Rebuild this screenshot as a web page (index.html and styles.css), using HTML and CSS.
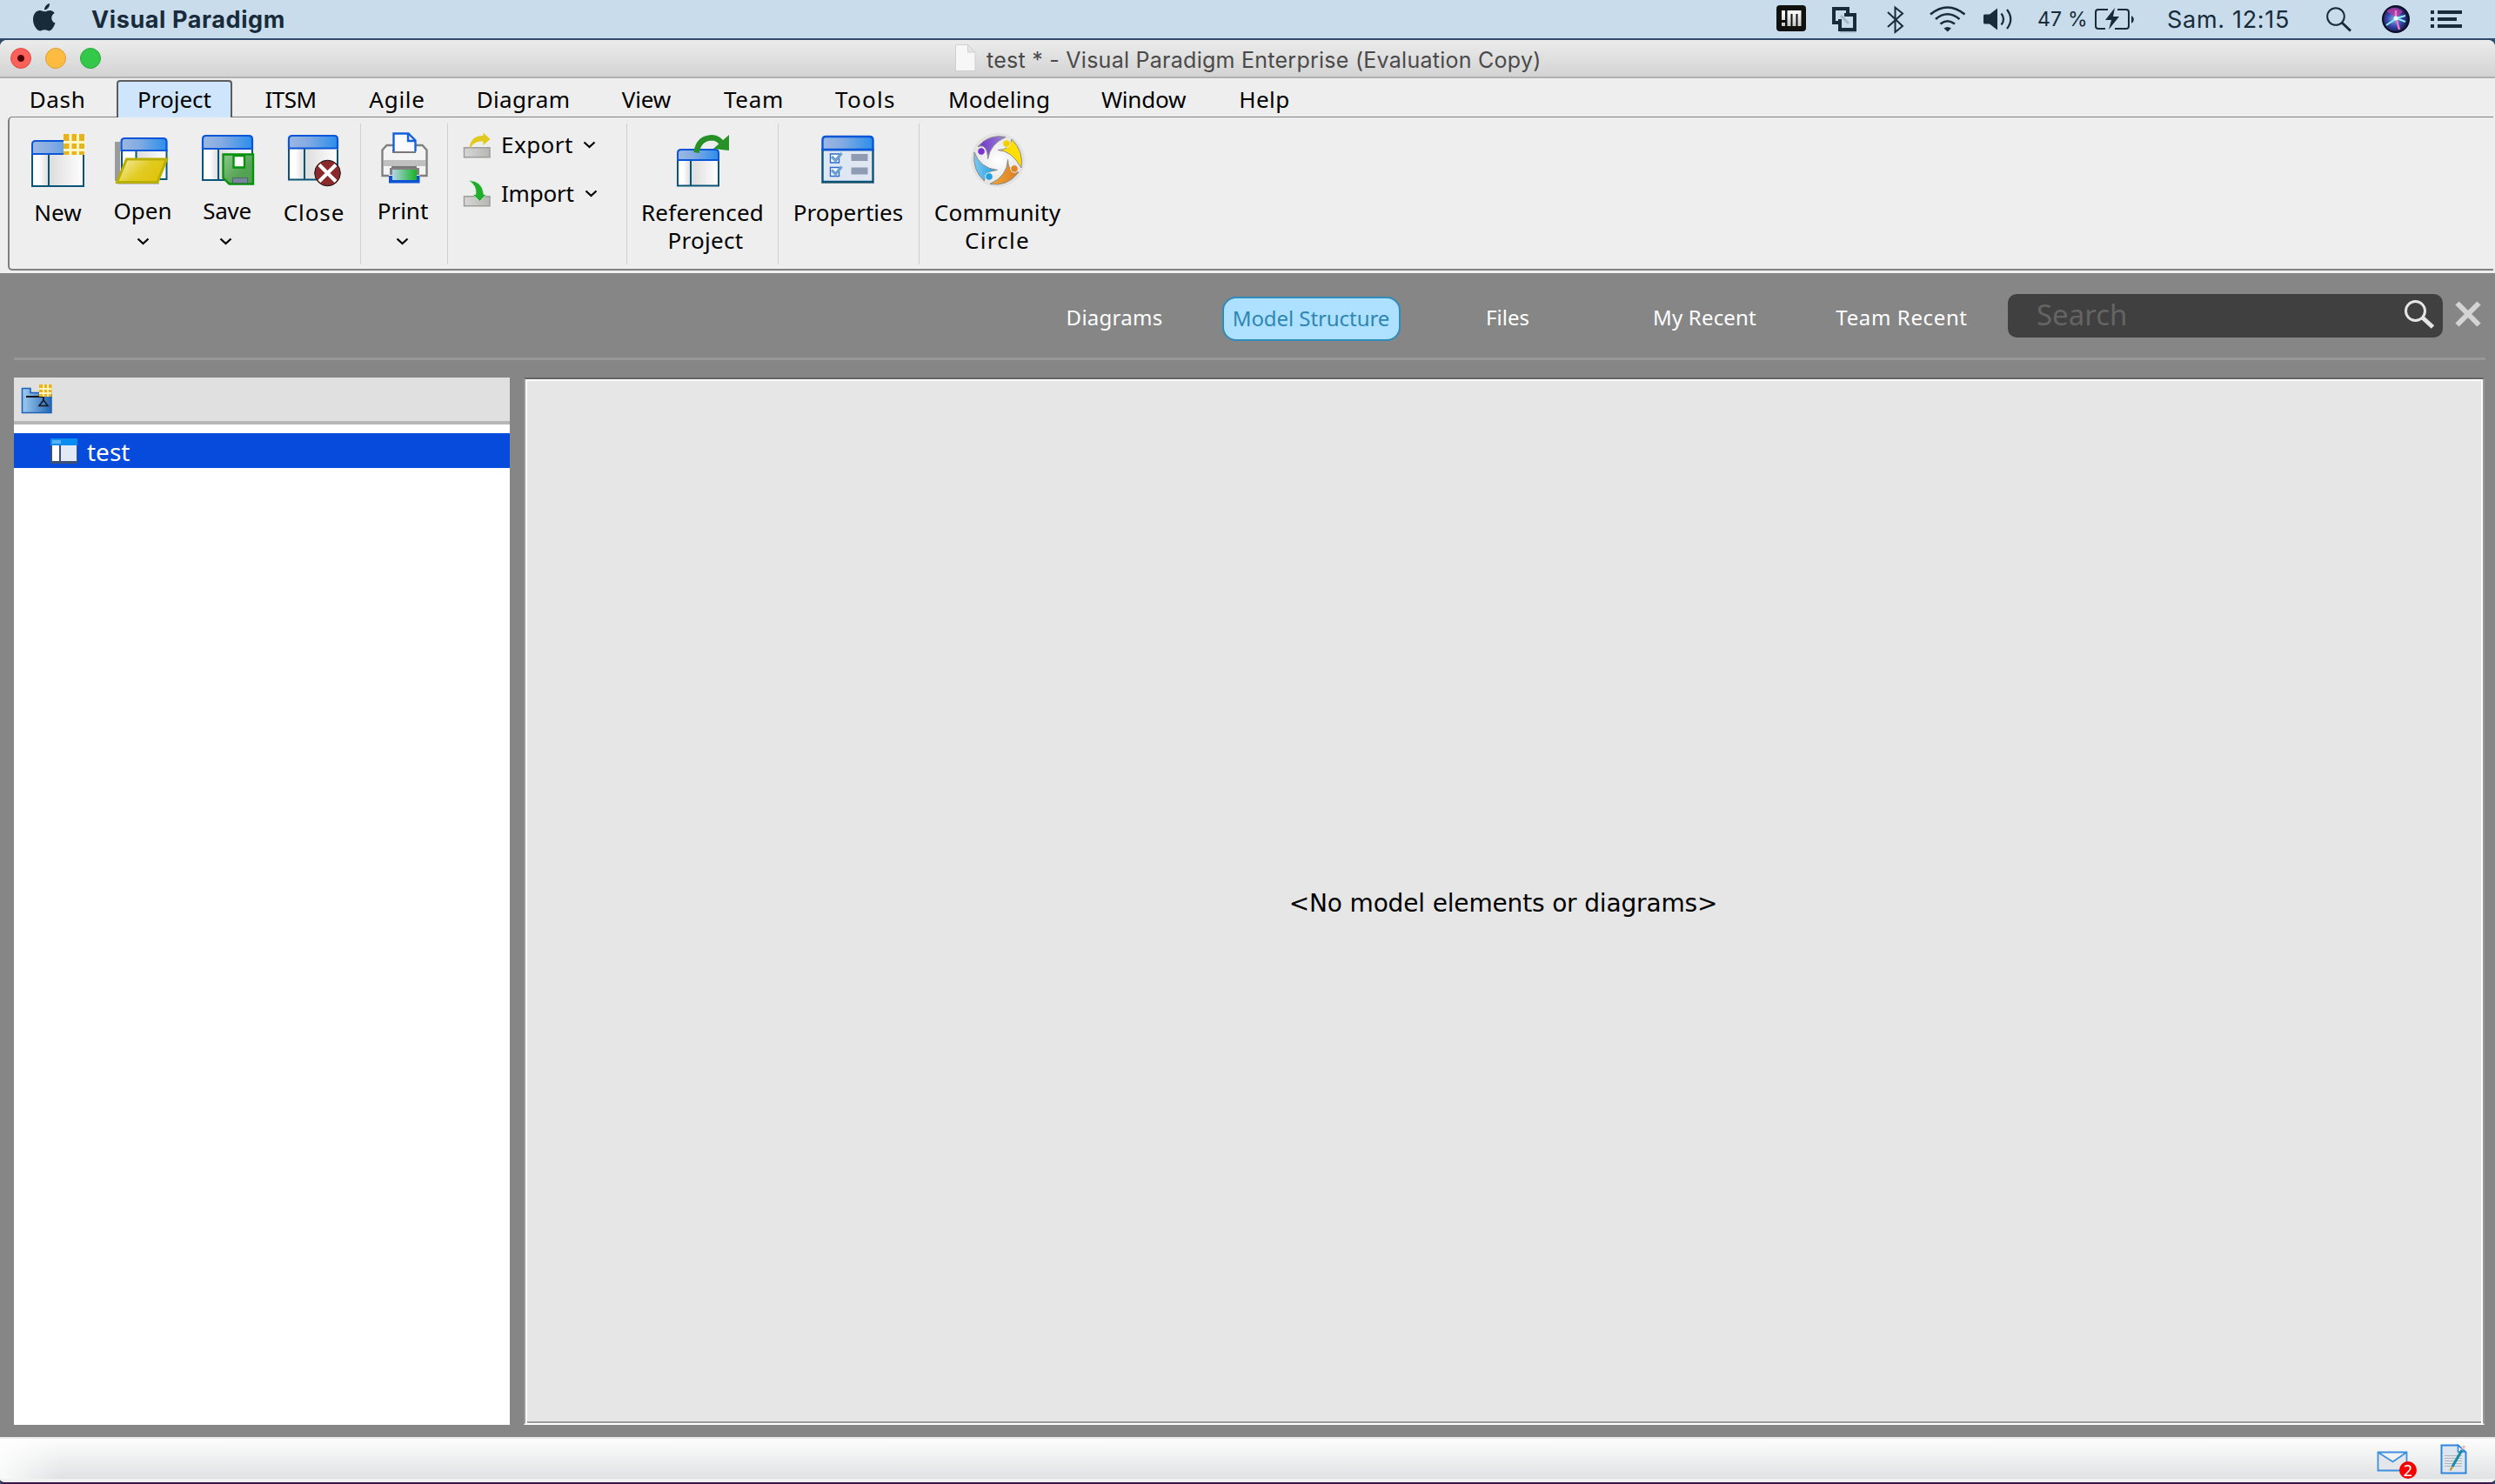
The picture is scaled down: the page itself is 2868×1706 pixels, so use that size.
FILE: index.html
```
<!DOCTYPE html>
<html lang="en">
<head>
<meta charset="utf-8">
<title>test * - Visual Paradigm Enterprise (Evaluation Copy)</title>
<link rel="stylesheet" href="styles.css">
</head>
<body>
<svg class="defs" width="0" height="0">
  <defs>
    <linearGradient id="head"><stop offset="0" stop-color="#9db8e2"/><stop offset=".4" stop-color="#82aae2"/><stop offset="1" stop-color="#2a8fec"/></linearGradient>
    <linearGradient id="side"><stop offset="0" stop-color="#fff"/><stop offset=".4" stop-color="#fff"/><stop offset="1" stop-color="#dcdcdc"/></linearGradient>
    <linearGradient id="pane"><stop offset="0" stop-color="#dcdcdc"/><stop offset="1" stop-color="#fff"/></linearGradient>
    <linearGradient id="gold" x1="0" y1="0" x2="1" y2=".5"><stop offset="0" stop-color="#f6f1b4"/><stop offset=".6" stop-color="#e2cb22"/><stop offset="1" stop-color="#dfc40c"/></linearGradient>
    <linearGradient id="disk" x1="0" y1="0" x2="1" y2="1"><stop offset="0" stop-color="#8fc68f"/><stop offset=".6" stop-color="#56a456"/><stop offset="1" stop-color="#4a9e4a"/></linearGradient>
    <linearGradient id="page"><stop offset="0" stop-color="#b5d4e8"/><stop offset="1" stop-color="#14b422"/></linearGradient>
    <linearGradient id="tray"><stop offset="0" stop-color="#d6d6d4"/><stop offset="1" stop-color="#b6b6b6"/></linearGradient>
    <linearGradient id="folder"><stop offset="0" stop-color="#9fcdf0"/><stop offset="1" stop-color="#2465b4"/></linearGradient>
    <radialGradient id="disc"><stop offset="0" stop-color="#fff"/><stop offset="1" stop-color="#e4e4e4"/></radialGradient>
    <linearGradient id="violet"><stop offset="0" stop-color="#7030c8"/><stop offset="1" stop-color="#9a86d8"/></linearGradient>
    <linearGradient id="cyan"><stop offset="0" stop-color="#7cc8ee"/><stop offset="1" stop-color="#1a9ce0"/></linearGradient>
    <linearGradient id="orange"><stop offset="0" stop-color="#f0a832"/><stop offset="1" stop-color="#dc7c22"/></linearGradient>
    <linearGradient id="badge" x1="0" y1="0" x2="0" y2="1"><stop offset="0" stop-color="#fff"/><stop offset="1" stop-color="#c8c8c8"/></linearGradient>
    <radialGradient id="siri" cx=".45" cy=".5" r=".55"><stop offset="0" stop-color="#7fb6e8"/><stop offset=".5" stop-color="#3a4ab0"/><stop offset="1" stop-color="#101038"/></radialGradient>
  </defs>
</svg>

<header class="menubar">
  <svg width="104" height="44" viewBox="0 0 104 44"><path fill="#172b3a" d="M51 11.500C51 8 53.500 4.500 57 4C57.300 7.800 54.500 11.200 51 11.500ZM51.200 13.300C52.800 13.300 54.600 11.900 57.300 11.900C59.300 11.900 61.500 13 62.700 14.900C57.700 17.700 58.500 24.700 63.500 26.600C62.400 29.900 59.600 35.400 56.500 35.400C54.700 35.400 53.900 34.200 51.300 34.200C48.700 34.200 47.800 35.400 46 35.400C42 35.400 38 28.500 38 22.600C38 15.700 42 12 45.600 12C48 12 49.800 13.300 51.200 13.300Z"/></svg>
  <span class="app-name">Visual Paradigm</span>
  <div class="status-items">
    <svg width="54" height="44" viewBox="2036 0 54 44"><rect x="2042" y="6" width="34" height="30" rx="4" fill="#10110f"/><path fill="url(#badge)" d="M2048 12h4v11h-4zM2048 26h4v4h-4zM2054.500 12h16v18h-4v-14h-2v14h-4v-14h-2v14h-4z"/></svg>
    <svg width="60" height="44" viewBox="2090 0 60 44"><path fill="none" stroke="#172b3a" stroke-width="4" d="M2115 26h-7v-16h16v8M2115 22v12h17v-17h-12"/><path fill="#c9dceb" d="M2112 14h9l-3 3 9 8-3 3-9-9-3 3z"/><path fill="#a3b8c8" d="M2115 19l9 9 2-2-9-9zM2115 36h19v1.500h-19z"/></svg>
    <svg width="55" height="44" viewBox="2150 0 55 44"><path fill="none" stroke="#172b3a" stroke-width="2" d="M2170 14l17 16-8.500 7V8.500l8.500 7-17 15.500"/></svg>
    <svg width="65" height="44" viewBox="2205 0 65 44"><g fill="none" stroke="#172b3a" stroke-width="2.600"><path d="M2219 16.500Q2238.500 .500 2258.500 16.500"/><path d="M2225 22Q2238.500 10.500 2252.500 22"/><path d="M2230.500 27.500Q2238.500 21 2247 27.500"/></g><path fill="#172b3a" d="M2234.500 32.500q4-3 8.500 0l-4.300 4z"/></svg>
    <svg width="60" height="44" viewBox="2270 0 60 44"><path fill="#172b3a" d="M2280 18q0-1.500 1.500-1.500h5.500l9-7v25l-9-7h-5.500q-1.500 0-1.500-1.500z"/><path fill="none" stroke="#172b3a" stroke-width="2.200" d="M2300.500 15.500q5 6.500 0 13M2307 11q8.500 11 0 22"/></svg>
    <span class="charge">47 %</span>
    <svg width="68" height="44" viewBox="2402 0 68 44"><g fill="none" stroke="#172b3a" stroke-width="2"><path d="M2423 11h-11q-3 0-3 3v16q0 3 3 3h8M2434 11h10q3 0 3 3v16q0 3-3 3h-13"/></g><path fill="#172b3a" d="M2431 9l-11 14h7l-3 11 12-15h-7zM2450 18q6 4 0 9z"/></svg>
    <span class="clock">Sam. 12:15</span>
    <svg width="70" height="44" viewBox="2650 0 70 44"><circle cx="2685" cy="19" r="9.800" fill="none" stroke="#172b3a" stroke-width="2"/><path stroke="#172b3a" stroke-width="3" d="M2692 26l10 9.500"/></svg>
    <svg width="65" height="44" viewBox="2720 0 65 44"><circle cx="2754" cy="22" r="15" fill="url(#siri)" stroke="#0a0f24" stroke-width="2"/><path fill="#c03aa8" opacity=".75" d="M2743 13q9-8 19 0l-6 7z"/><path fill="none" stroke="#8ff0f4" stroke-width="2" d="M2743 29l12-8 10 4M2754 21l11-3"/><path stroke="#f07ac8" stroke-width="2.500" d="M2754 20l4 14M2754 21v-9"/><circle cx="2754" cy="21" r="2.500" fill="#e6fbff"/></svg>
    <svg width="83" height="44" viewBox="2785 0 83 44"><path fill="#172b3a" d="M2794 12h4v4h-4zM2794 20h4v4h-4zM2794 28h4v4h-4zM2802 12h28v4h-28zM2802 20h22v4h-22zM2802 28h28v4h-28z"/></svg>
  </div>
</header>

<div class="frame">
<div class="titlebar">
  <i class="light red"></i><i class="light amber"></i><i class="light green"></i>
  <div class="window-title">
    <svg width="26" height="34" viewBox="0 0 26 34"><path fill="#f7f7f7" stroke="#cfcfcf" d="M1.500 1.500h14l8.500 8.500v21.500h-22.500zM15.500 1.500v8.500h8.500"/></svg>
    <span>test * - Visual Paradigm Enterprise (Evaluation Copy)</span>
  </div>
</div>

<nav class="tabs">
  <span class="tab dash">Dash</span>
  <span class="tab project">Project</span>
  <span class="tab itsm">ITSM</span>
  <span class="tab agile">Agile</span>
  <span class="tab diagram">Diagram</span>
  <span class="tab view">View</span>
  <span class="tab team">Team</span>
  <span class="tab tools">Tools</span>
  <span class="tab modeling">Modeling</span>
  <span class="tab window">Window</span>
  <span class="tab help">Help</span>
</nav>

<section class="ribbon">
  <div class="tool new">
    <svg width="68" height="68" viewBox="34 150 68 68"><path fill="url(#side)" d="M38 177h19v37h-19z"/><path fill="url(#pane)" d="M57 177h40v37h-40z"/><path fill="none" stroke="#0a5577" stroke-width="2" d="M38 177v37h59v-37M57 177v37"/><path fill="url(#head)" stroke="#0b55d8" stroke-width="2" d="M38 177v-11q0-4 4-4h51q4 0 4 4v11z"/><path fill="#e8b21c" d="M74 154h24v24h-24z"/><path stroke="#fff8c4" stroke-width="3" d="M82 154v24M90.500 154v24M74 163.500h24.500M74 172.500h24.500"/></svg>
    <span>New</span>
  </div>
  <div class="tool open">
    <svg width="68" height="68" viewBox="131 150 68 68"><path fill="#9a9a9a" d="M133 163h6v45h-6z"/><path fill="#bbb" d="M136 210h48v2h-48z"/><path fill="#fff" d="M141 173h52v33h-52z"/><path fill="url(#pane)" d="M158 173h34v33h-34z"/><path fill="none" stroke="#0a5577" stroke-width="2" d="M141 172v34h51.500v-34M157.500 173v33"/><path fill="url(#head)" stroke="#0b55d8" stroke-width="2.200" d="M140.500 173v-10q0-4 4-4h44q4 0 4 4v10z"/><path fill="url(#gold)" stroke="#b9af00" stroke-width="3" d="M146.500 183h46l-10.500 26.500h-46.500z"/></svg>
    <span>Open</span>
    <svg class="chevron" width="15" height="10" viewBox="0 0 15 10"><path d="M1.500 1.500l6 5.500 6-5.500"/></svg>
  </div>
  <div class="tool save">
    <svg width="68" height="68" viewBox="228 150 68 68"><path fill="url(#side)" d="M234 171h18v36h-18z"/><path fill="url(#pane)" d="M252 171h39v36h-39z"/><path fill="none" stroke="#0a5577" stroke-width="2" d="M234 171v36h57v-36M252 171v36"/><path fill="url(#head)" stroke="#0b55d8" stroke-width="2.200" d="M234 171v-11q0-4 4-4h49q4 0 4 4v11z"/><path fill="url(#disk)" stroke="#05920d" stroke-width="2.400" d="M257.500 177.500h34.500v34h-27.500l-7-7z"/><path fill="#fff" stroke="#05920d" stroke-width="2.400" d="M269.500 179h12.500v13.500h-12.500z"/><path fill="#75879f" stroke="#4c6b58" d="M268.500 204.500h17v6h-17z"/></svg>
    <span>Save</span>
    <svg class="chevron" width="15" height="10" viewBox="0 0 15 10"><path d="M1.500 1.500l6 5.500 6-5.500"/></svg>
  </div>
  <div class="tool close">
    <svg width="68" height="68" viewBox="327 150 68 68"><path fill="url(#side)" d="M332 171h18v35h-18z"/><path fill="url(#pane)" d="M350 171h38v35h-38z"/><path fill="none" stroke="#0a5577" stroke-width="2" d="M332 171v35.500h56v-35M350 171v35"/><path fill="url(#head)" stroke="#0b55d8" stroke-width="2.200" d="M332 170.500v-10.500q0-4 4-4h48q4 0 4 4v10.500z"/><circle cx="376.500" cy="199" r="14.800" fill="#8b2a2c" stroke="#111"/><path stroke="#fff" stroke-width="4" d="M367 189.500l19 19M386 189.500l-19 19"/></svg>
    <span>Close</span>
  </div>
  <i class="rule"></i>
  <div class="tool print">
    <svg width="68" height="68" viewBox="429 150 68 68"><path fill="#f4f4f4" stroke="#808080" stroke-width="2.400" d="M447 202h-7.500v-29.500l5-5.500h41l5 5.500v29.500h-8"/><path fill="#c0c0c0" d="M441 184h48v7h-48z"/><path fill="#787878" d="M451 172h27v4h-27zM450 191h29v5h-29z"/><path fill="#fbfbff" stroke="#1560dc" stroke-width="2.400" d="M452.500 174v-20.500h17l8 8v12.500M469 154v8h8"/><path fill="#0e52d8" d="M447 202h35.500v8.500h-35.500z"/><path fill="#808080" d="M448 193h34v8h-34z"/><path fill="url(#page)" d="M451 195h28v12h-28z"/></svg>
    <span>Print</span>
    <svg class="chevron" width="15" height="10" viewBox="0 0 15 10"><path d="M1.500 1.500l6 5.500 6-5.500"/></svg>
  </div>
  <i class="rule"></i>
  <div class="transfer">
    <div class="row export">
      <svg width="36" height="34" viewBox="530 150 36 34"><path fill="url(#tray)" stroke="#9c9c9c" stroke-width="1.500" d="M533.500 169.800h29.500v11h-29.500z"/><path fill="#e3c91f" d="M539.500 170q2-14.500 16-14v-3.500l8 7.500-8 7v-4.500q-10-1-14.500 7z"/></svg>
      <span>Export</span>
      <svg class="chevron" width="15" height="10" viewBox="0 0 15 10"><path d="M1.500 1.500l6 5.500 6-5.500"/></svg>
    </div>
    <div class="row import">
      <svg width="36" height="34" viewBox="530 206 36 34"><path fill="url(#tray)" stroke="#9c9c9c" stroke-width="1.500" d="M533.500 225.800h29.500v11h-29.500z"/><path fill="#1fae2c" stroke="#eef6ee" stroke-width=".6" d="M538.500 207.500q16 0 17.500 16h3l-7.500 8-8-8h3.500q1-11-8.500-16z"/></svg>
      <span>Import</span>
      <svg class="chevron" width="15" height="10" viewBox="0 0 15 10"><path d="M1.500 1.500l6 5.500 6-5.500"/></svg>
    </div>
  </div>
  <i class="rule"></i>
  <div class="tool referenced">
    <svg width="68" height="68" viewBox="773 150 68 68"><path fill="url(#side)" d="M778 184h15v29h-15z"/><path fill="url(#pane)" d="M793 184h32v29h-32z"/><path fill="none" stroke="#0a5577" stroke-width="2" d="M778 184v29.500h47v-29.500M793 184v29"/><path fill="url(#head)" stroke="#0b55d8" stroke-width="2" d="M778 184v-8q0-4 4-4h39q4 0 4 4v8z"/><path fill="none" stroke="#279127" stroke-width="6.500" d="M799.500 175.500q2.500-17 18-17.300q8 .300 12.500 8.500"/><path fill="#279127" d="M837 155v18l-18-2z"/></svg>
    <span>Referenced</span>
    <span class="second">Project</span>
  </div>
  <i class="rule"></i>
  <div class="tool properties">
    <svg width="68" height="68" viewBox="940 150 68 68"><path fill="#dfe7f3" stroke="#0a5577" stroke-width="2.400" d="M944.500 172h58v37h-58z"/><path stroke="#5f7f8c" stroke-width="1" d="M943 210.500h61"/><path fill="url(#head)" stroke="#0b55d8" stroke-width="2.400" d="M944.500 172v-11q0-4 4-4h50q4 0 4 4v11z"/><path fill="#8f9bb2" d="M977.500 177h19v8h-19zM977.500 192.500h19v8h-19z"/><path fill="#fff" stroke="#2a6ad0" stroke-width="1.400" d="M953.500 177h10v10h-10zM953.500 192.500h10v10h-10z"/><path fill="none" stroke="#6b9fd2" stroke-width="3.200" d="M955 180l4.500 4.500 7-8.500M955 195.500l4.500 4.500 7-8.500"/></svg>
    <span>Properties</span>
  </div>
  <i class="rule"></i>
  <div class="tool community">
    <svg width="68" height="68" viewBox="1112 150 68 68"><circle cx="1146" cy="184" r="31" fill="#e2e2e2"/><circle cx="1146" cy="184" r="28" fill="url(#disc)"/><g stroke="#8a8a8a" stroke-width="1"><path fill="url(#violet)" d="M1123 168.500q13-15 32-11q-18 8-20.500 25.500q0-9-3-12.500q-2-4-8.500-2z"/><path fill="#ffdf00" d="M1146 172.500q14 0 16-12.500q14 14 11 33q-11-20-27-20.500z"/><path fill="url(#orange)" d="M1157.500 183.500q0 15 12.500 14.500q-13 17-33 13.500q20-9 20.500-28z"/><path fill="url(#cyan)" d="M1119 175q6 18 26.500 20.500q-15 1-15 12.500q-14-12-11.500-33z"/></g><g stroke="#eee" stroke-width="1"><circle cx="1127" cy="174" r="4.300" fill="#7a32d0"/><circle cx="1156" cy="165" r="4.300" fill="#f5cf00"/><circle cx="1165" cy="194" r="4.300" fill="#e08424"/><circle cx="1136" cy="203" r="4.300" fill="#1fa0e0"/></g></svg>
    <span>Community</span>
    <span class="circle">Circle</span>
  </div>
</section>

<main class="workspace">
  <div class="switcher">
    <div class="views">
      <span class="diagrams">Diagrams</span>
      <span class="current">Model Structure</span>
      <span class="files">Files</span>
      <span class="recent">My Recent</span>
      <span class="team-recent">Team Recent</span>
    </div>
    <div class="search">
      <span>Search</span>
      <svg width="40" height="40" viewBox="2760 342 40 40"><circle cx="2776.500" cy="357.500" r="11" fill="none" stroke="#e6e6e6" stroke-width="3"/><path stroke="#e6e6e6" stroke-width="5" d="M2784.500 365l12 11"/></svg>
    </div>
    <svg class="dismiss" width="32" height="32" viewBox="0 0 32 32"><path stroke="#d4d4d4" stroke-width="6" d="M3.500 3.500l25 25M28.500 3.500l-25 25"/></svg>
  </div>
  <div class="panes">
    <aside class="tree">
      <div class="tree-tools">
        <svg width="40" height="40" viewBox="22 439 40 40"><path fill="url(#folder)" stroke="#1e62b8" stroke-width="1.600" d="M25.500 446.500h9.500v5h24v23h-33.500z"/><path fill="none" stroke="#8fbde6" stroke-width="1" d="M27.500 473v-18.500"/><path stroke="#15181c" stroke-width="2" d="M30 456h20M50 456v5"/><path fill="none" stroke="#15181c" stroke-width="1.600" d="M50 460l-5 6.500h10z"/><path fill="#ecb31e" d="M45 442h14.500v14h-14.500z"/><path stroke="#fff6bc" stroke-width="1.800" d="M50 442v14M55 442v14M45 447h14.500M45 452h14.500"/></svg>
      </div>
      <div class="tree-row">
        <svg width="32" height="32" viewBox="58 502 32 32"><path fill="#3e4f74" d="M58 510h31v23h-31z"/><path fill="#0a8cf0" d="M58 504h31v8h-31z"/><path fill="#5cb0f6" d="M60 506h10v4h-10z"/><path fill="#fff" d="M60 512h8v18h-8z"/><path fill="#e2e8f5" d="M70 512h18v18h-18z"/></svg>
        <span>test</span>
      </div>
    </aside>
    <section class="canvas"><p>&lt;No model elements or diagrams&gt;</p></section>
  </div>
</main>

<footer class="statusbar">
  <div class="mail">
    <svg width="36" height="24" viewBox="2732 1668 36 24"><path fill="#e4e6e9" stroke="#3c8fe0" stroke-width="1.800" d="M2733.500 1669.500h33v21h-33zl17 11 16-11"/></svg>
    <b class="count">2</b>
  </div>
  <svg width="34" height="38" viewBox="2804 1658 34 38"><path fill="#dde5ee" stroke="#2f86dc" stroke-width="2" d="M2806.500 1661.500h19l9 8v24h-28z"/><path fill="#fff" stroke="#2f86dc" stroke-width="1.600" d="M2825.500 1661.500v7.500h8z"/><path stroke="#b4b4b4" stroke-width="1.200" d="M2810 1673.500h20M2810 1676.500h20M2810 1679.500h20M2810 1682.500h20M2810 1685.500h20"/><path stroke="#168aa6" stroke-width="3" d="M2830 1667l-11 19"/><path stroke="#ecc0b8" stroke-width="3" d="M2833 1662l-2.500 4"/><path stroke="#c09a4a" stroke-width="2.500" d="M2819 1686l-2.500 4.500"/></svg>
</footer>
</div>
</body>
</html>
```
FILE: styles.css
```
* { box-sizing: border-box; }

body {
  margin: 0;
  width: 2868px;
  height: 1706px;
  overflow: hidden;
  display: flex;
  flex-direction: column;
  background: #2f4a68;
  color: #000;
  font: 26px/32px "Noto Sans", sans-serif;
}

svg { display: block; flex: none; }
.defs { position: absolute; }

/* System menu bar */
.menubar {
  display: flex;
  height: 46px;
  flex: none;
  background: #c9dceb;
  border-bottom: 2px solid #2f4a68;
  color: #172b3a;
  font-family: Inter, sans-serif;
  line-height: 45px;
  white-space: nowrap;
}
.app-name { font-size: 27px; font-weight: 700; letter-spacing: .6px; padding-left: 1px; }
.status-items { display: flex; margin-left: auto; }
.charge { width: 72px; padding-left: 12px; font-size: 23px; letter-spacing: .2px; }
.clock { width: 180px; padding-left: 21px; font-size: 27px; letter-spacing: .7px; }

.frame {
  flex: 1;
  min-height: 0;
  display: flex;
  flex-direction: column;
  background: #eee;
  border-bottom: 2px solid #3b1446;
  border-radius: 8px 8px 6px 6px;
  overflow: hidden;
}

/* Window title bar */
.titlebar {
  display: flex;
  align-items: center;
  gap: 16px;
  height: 44px;
  flex: none;
  padding-left: 12px;
  background: linear-gradient(#ececec, #d3d3d3);
  border-bottom: 2px solid #b1b1b1;
}
.light { width: 24px; height: 24px; border-radius: 50%; border: 1px solid; }
.red { background: radial-gradient(circle, #4d0000 0 3.500px, #fc605b 4.500px); border-color: #e2463f; }
.amber { background: #fdbc40; border-color: #de9f34; }
.green { background: #34c84a; border-color: #27aa35; }
.window-title {
  display: flex;
  align-items: center;
  margin-left: 965px;
  gap: 11px;
  color: #4a4a4a;
  font: 25px/34px Inter, sans-serif;
  letter-spacing: .26px;
  white-space: nowrap;
}
.window-title span { padding-top: 3px; }

/* Ribbon tabs */
.tabs { display: flex; height: 45px; flex: none; padding-top: 2px; margin-bottom: -1px; position: relative; }
.tab { display: flex; justify-content: center; padding-top: 6px; height: 42px; }
.dash { width: 134px; letter-spacing: .66px; padding-right: 2px; }
.project { width: 133px; height: 43px; padding-top: 4px; border: 2px solid #5c5c5c; border-bottom: 0; border-radius: 4px 4px 0 0; background: #cfe5fc; }
.itsm { width: 135px; letter-spacing: -.5px; padding-right: 1px; }
.agile { width: 107px; letter-spacing: .74px; padding-left: 2px; }
.diagram { width: 184px; letter-spacing: .32px; padding-left: 1px; }
.view { width: 101px; letter-spacing: -.15px; padding-right: 1px; }
.team { width: 143px; letter-spacing: .7px; padding-left: 2px; }
.tools { width: 114px; letter-spacing: 1.3px; padding-left: 2px; }
.modeling { width: 195px; letter-spacing: .22px; }
.window { width: 138px; letter-spacing: -.23px; padding-right: 1px; }
.help { width: 139px; letter-spacing: .45px; }

/* Ribbon */
.ribbon {
  display: flex;
  height: 177px;
  flex: none;
  margin: 0 2px 3px 9px;
  padding-left: 8px;
  border: 2px solid #808080;
  border-width: 1px 0 2px 2px;
  border-radius: 5px 0 0 5px;
}
.tool { display: flex; flex-direction: column; align-items: center; padding-top: 15px; flex: none; }
.tool > span { white-space: nowrap; }
.tool svg + span { margin-top: 10px; }
.open svg + span, .save svg + span, .print svg + span { margin-top: 8px; }
.chevron { fill: none; stroke: #000; stroke-width: 2.200; }
.tool .chevron { margin-top: 15px; }
.new { width: 95px; }
.open { width: 100px; }
.save { width: 94px; }
.save span { letter-spacing: -.3px; }
.save .chevron { margin-right: 4px; }
.close { width: 106px; letter-spacing: .9px; }
.print { width: 96px; margin-right: 3px; }
.print .chevron { margin-right: 1px; }
.rule { width: 1px; height: 162px; margin-top: 7px; background: #cfcfcf; flex: none; }
.transfer { width: 205px; padding: 15px 0 0 15px; }
.row { display: flex; height: 56px; }
.row span { width: 94px; margin-left: 10px; }
.row .chevron { margin-top: 12px; }
.export span { letter-spacing: .47px; }
.import span { letter-spacing: -.2px; width: 96px; }
.referenced { width: 173px; letter-spacing: .27px; }
.second { padding-left: 7px; }
.properties { width: 160px; margin-right: 1px; }
.community { width: 179px; letter-spacing: .37px; }
.circle { letter-spacing: 1.290px; }

/* Workspace */
.workspace { flex: none; height: 1338px; background: #868686; display: flex; flex-direction: column; }
.switcher {
  display: flex;
  flex: none;
  height: 100px;
  margin: 0 11px 0 16px;
  border-bottom: 3px solid #989898;
}
.views {
  display: grid;
  grid-template-columns: repeat(5, 226px);
  margin-left: 1152px;
  padding-top: 27px;
  height: 78px;
  color: #fff;
  font-size: 24px;
  line-height: 46px;
  white-space: nowrap;
  justify-items: center;
}
.current { width: 205px; text-align: center; background: #aee0ff; border: 2px solid #2f8bb9; border-radius: 16px; color: #2f86b2; letter-spacing: -.07px; }
.diagrams { padding-top: 1px; letter-spacing: .25px; }
.files { padding-top: 1px; }
.recent { padding: 1px 0 0 1px; letter-spacing: .18px; }
.team-recent { padding: 1px 0 0 2px; letter-spacing: .63px; }
.search {
  display: flex;
  width: 500px;
  height: 50px;
  margin: 24px 0 0 10px;
  padding: 4px 8px 0 33px;
  background: #404040;
  border-radius: 10px;
  color: #646464;
  font-size: 33px;
  line-height: 40px;
  justify-content: space-between;
}
.dismiss { margin: 31px 0 0 13px; }

.panes { display: flex; gap: 16px; flex: 1; padding: 20px 12px 14px 16px; }
.tree { width: 570px; background: #fff; }
.tree-tools { height: 54px; padding: 5px 6px; background: #e0e0e0; border-bottom: 4px solid #b6b6b6; }
.tree-row {
  display: flex;
  height: 40px;
  margin-top: 10px;
  padding: 4px 0 0 42px;
  gap: 10px;
  background: #064bdb;
  color: #fff;
  font-size: 28px;
  line-height: 35px;
}
.canvas {
  flex: 1;
  display: flex;
  align-items: center;
  justify-content: center;
  background: #e6e6e6;
  border: 2px solid #999;
  border-top-color: #646464;
  border-bottom-color: #fff;
  box-shadow: inset 2px 2px #fff, inset -2px 0 #fff, inset 0 -2px #999;
}
.canvas p { margin: 6px 2px 0 0; font: 28px/36px "DejaVu Sans", sans-serif; letter-spacing: -.16px; }

/* Status bar */
.statusbar {
  display: flex;
  flex: 1;
  padding: 4px 30px 0 0;
  justify-content: flex-end;
  border-top: 2px solid #ececec;
  border-bottom: 4px solid #f1f1f2;
  background: linear-gradient(90deg, #ffffffd0, #fff0 70px), linear-gradient(#fdfdfd, #e0e2e3);
}
.mail { position: relative; padding-top: 10px; margin-right: 36px; }
.count {
  position: absolute;
  left: 26px;
  top: 22px;
  width: 20px;
  height: 20px;
  border-radius: 50%;
  background: #f40000;
  color: #fff;
  font-size: 18px;
  font-weight: 400;
  line-height: 20px;
  text-align: center;
}
```
